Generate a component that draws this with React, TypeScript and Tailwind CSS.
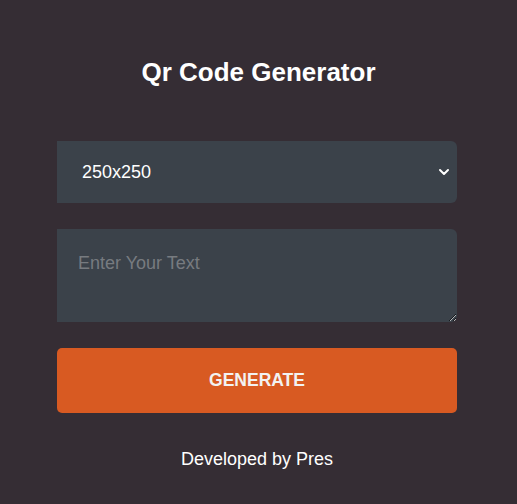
import React, { useState } from 'react';

export default function App() {
  const [size, setSize] = useState('250x250');
  const [text, setText] = useState('');

  return (
    <div className="min-h-[504px] w-full bg-[#352d34] flex flex-col items-center pt-[56px] font-['Liberation_Sans',Arial,sans-serif]">
      <h1 className="text-[26px] leading-[32px] font-bold text-white">Qr Code Generator</h1>

      <div className="w-[400px] mr-[3px] mt-[53px] flex flex-col">
        <div className="relative">
          <select
            value={size}
            onChange={e => setSize(e.target.value)}
            className="appearance-none w-full h-[62px] bg-[#3b424a] text-white text-[18px] pl-[25px] pr-10 rounded-r-[6px] outline-none"
          >
            <option>150x150</option>
            <option>200x200</option>
            <option>250x250</option>
            <option>300x300</option>
          </select>
          <svg className="absolute right-[7px] top-[25px] pointer-events-none" width="12" height="12" viewBox="0 0 12 12" fill="none">
            <path d="M2 4l4 4 4-4" stroke="white" strokeWidth="2" strokeLinecap="round" strokeLinejoin="round" />
          </svg>
        </div>

        <textarea
          value={text}
          onChange={e => setText(e.target.value)}
          placeholder="Enter Your Text"
          className="mt-[26px] w-full h-[93px] bg-[#3b424a] text-white placeholder:text-[#777b80] text-[18px] px-[21px] py-[21px] rounded-r-[6px] outline-none"
        />

        <button className="mt-[26px] w-full h-[65px] bg-[#d85a22] text-[#f2f2f2] text-[17.5px] font-bold rounded-[5px]">
          GENERATE
        </button>

        <p className="mt-[33px] text-center text-white text-[18px]">Developed by Pres</p>
      </div>
    </div>
  );
}
